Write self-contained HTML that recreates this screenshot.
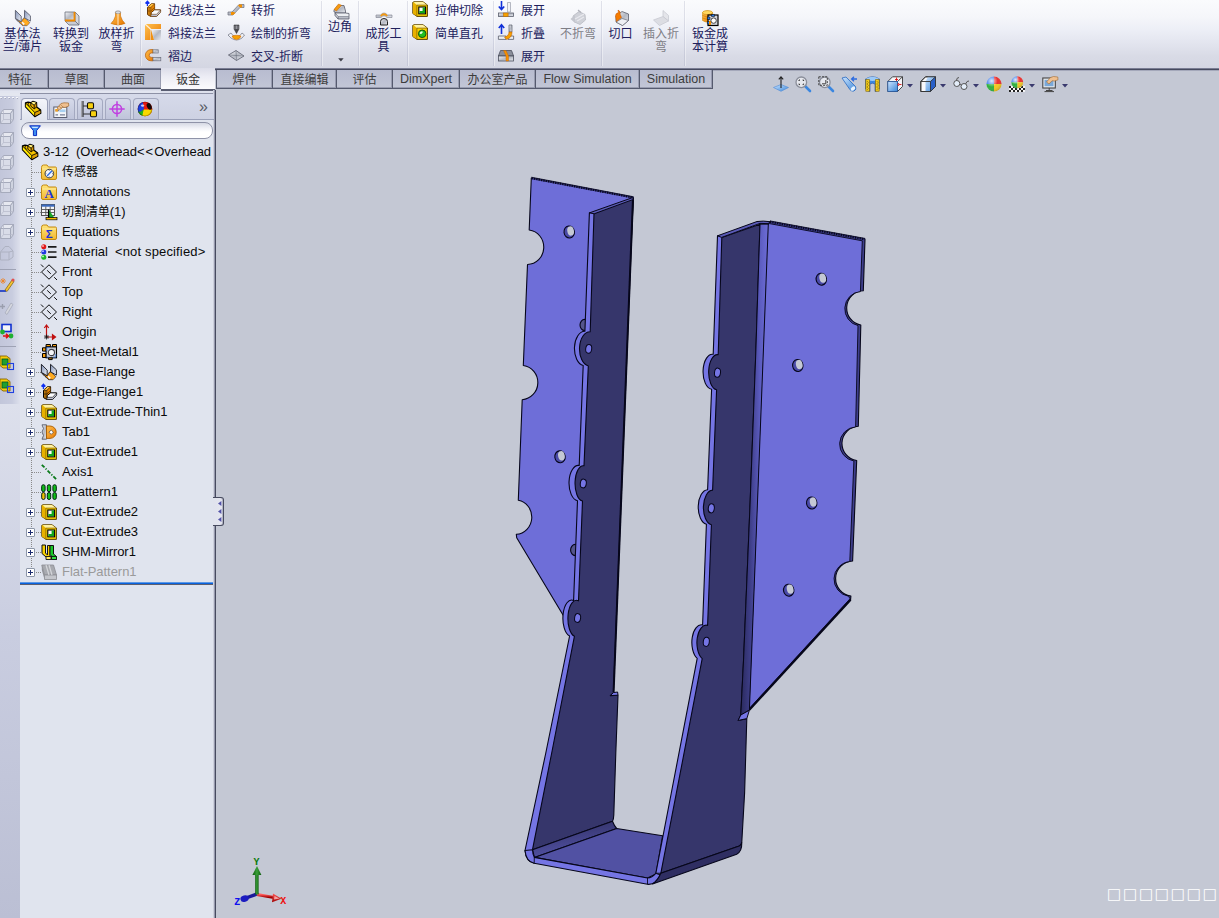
<!DOCTYPE html><html lang="zh"><head><meta charset="utf-8"><title>SolidWorks</title><style>

*{box-sizing:border-box;margin:0;padding:0}
html,body{width:1219px;height:918px;overflow:hidden;background:#c4c8d4}
body{position:relative;font-family:"Liberation Sans","Noto Sans CJK SC",sans-serif;font-size:12px;color:#1f1f5a}
.abs{position:absolute}
#ribbon{position:absolute;left:0;top:0;width:1219px;height:68px;background:linear-gradient(#fafbfd 0,#f5f6fa 25%,#eceef6 45%,#e2e4ee 65%,#d9dbe6 82%,#d4d6e2 100%)}
.ribline{position:absolute;top:68px;height:3px;background:linear-gradient(#7a7d93 0,#7a7d93 33%,#464a5e 33%,#464a5e 66%,#a4a8ba 66%)}
.rl{position:absolute;white-space:nowrap;line-height:13px;font-size:12px;color:#20205c;text-align:center;transform:translateX(-50%)}
.rs{position:absolute;white-space:nowrap;line-height:14px;font-size:12px;color:#20205c}
.dis{color:#7e7e86}
.sep{position:absolute;top:1px;width:2px;height:65px;background:linear-gradient(90deg,rgba(150,154,180,.26) 0,rgba(150,154,180,.26) 50%,rgba(255,255,255,.4) 50%)}
  .tab{position:absolute;top:70px;height:19px;border:1px solid #555a6e;border-top:none;box-shadow:inset -1px -1px 0 rgba(120,124,146,.55);background:linear-gradient(#b8bcd0,#c2c6d6);color:#3c3c3c;font-size:12px;line-height:20px;text-align:center;white-space:nowrap}
.tab.on{background:linear-gradient(#dcdde9,#ececf4 40%,#fbfbfd);border:none;box-shadow:none;border-bottom:2px solid #5a5e72;top:68px;height:23px;line-height:24px;color:#333}
#lstrip{position:absolute;left:0;top:92px;width:20px;height:312px;background:linear-gradient(90deg,#c2c6da 0,#c8ccdf 60%,#dde0ec 100%)}
#lstrip2{position:absolute;left:0;top:404px;width:20px;height:514px;background:linear-gradient(#dde0ec,#c9cde0 45%,#bbbfd4)}
#panel{position:absolute;left:20px;top:92px;width:194px;height:826px;background:#e0e4ee}
#split{position:absolute;left:213px;top:90px;width:3px;height:828px;background:linear-gradient(90deg,#cdd0dc 0,#cdd0dc 33%,#9699ad 33%,#9699ad 66%,#474b5f 66%)}
.row{position:absolute;left:62px;white-space:nowrap;font-size:13px;line-height:16px;color:#0a0a0a;letter-spacing:-0.05px}
.pm{position:absolute;left:26px;width:9px;height:9px;border:1px solid #8c96a8;background:#fff;border-radius:1px}
.pm:before{content:"";position:absolute;left:1px;top:3px;width:5px;height:1px;background:#1c2c70}
.pm:after{content:"";position:absolute;left:3px;top:1px;width:1px;height:5px;background:#1c2c70}
.tofu{position:absolute;width:12px;height:12px;border:1px solid #fff;box-shadow:inset 0 0 0 0.5px rgba(255,255,255,.6)}
svg{overflow:visible}

</style></head><body>
<svg class="model" width="1219" height="918" viewBox="0 0 1219 918" style="position:absolute;left:0;top:0">
<defs>
<linearGradient id="gb" x1="0" x2="1" y1="0" y2="0"><stop offset="0" stop-color="#2a2a5e"/><stop offset="0.35" stop-color="#3e3e88"/><stop offset="0.7" stop-color="#5c5cc0"/><stop offset="1" stop-color="#6e6ed8"/></linearGradient>
<linearGradient id="gl" x1="0" x2="0.25" y1="0" y2="1"><stop offset="0" stop-color="#302f62"/><stop offset="1" stop-color="#5151a3"/></linearGradient>
</defs>
<path d="M531.3 178 L633.3 197.5 L612 640 L578 640 L516.7 537.7 L516.3 534.3 A16.4 17.2 0 0 0 518.3 500.2 L522.2 399.7 A16.8 17.2 0 0 0 523.3 365.5 L527.5 264.5 A16.3 17.3 0 0 0 529.2 230 Z" fill="#6e6ed8" stroke="#06061a" stroke-width="1.1" stroke-linejoin="round"/>
<path d="M531.6 178.2 L633.3 197.6" stroke="#34347a" stroke-width="2" fill="none"/>
<path d="M531.6 178.2 L633.3 197.6" stroke="#06061a" stroke-width="2" stroke-dasharray="1.2 1.2" fill="none"/>
<path d="M531.4 177.2 L633.3 196.7" stroke="#06061a" stroke-width="0.7" fill="none"/>
<g><ellipse cx="569.2" cy="232" rx="5.2" ry="6" fill="#4a4aa8" stroke="#06061a" stroke-width="1.1" transform="rotate(-8 569.2 232)"/><ellipse cx="570.8000000000001" cy="231.3" rx="3.3" ry="4.7" fill="#c4c8d4" transform="rotate(-12 569.2 232)"/></g>
<g><ellipse cx="560" cy="456.8" rx="5.2" ry="6" fill="#4a4aa8" stroke="#06061a" stroke-width="1.1" transform="rotate(-8 560 456.8)"/><ellipse cx="561.6" cy="456.1" rx="3.3" ry="4.7" fill="#c4c8d4" transform="rotate(-12 560 456.8)"/></g>
<ellipse cx="584.6" cy="325" rx="4.6" ry="5.6" fill="#55558c" stroke="#06061a" stroke-width="1.1"/>
<ellipse cx="575.2" cy="550" rx="4.6" ry="5.6" fill="#55558c" stroke="#06061a" stroke-width="1.1"/>
<path d="M589.4 212.8 L584.9 331.3 A10.3 17.2 0 0 0 583.2 365.5 L579.2 465.5 A9.3 17.6 0 0 0 577.5 500.7 L573.6 600.5 A8.6 18 0 0 0 569.6 636.0 L545.8 753.0 L525.0 850.5 Q526 861.5 534.2 863.3 L540 850 L533.0 850.5 L553.8 753.0 L577.6 636.0 L581.6 600.5 L585.5 500.7 L587.2 465.5 L591.2 365.5 L592.9 331.3 L597.4 212.8 Z" fill="#7575e4" stroke="#06061a" stroke-width="1.1" stroke-linejoin="round"/>
<path d="M633.2 198.2 L613.4 693 L610.3 695.6 L618 695.2 L615.8 753 L613.8 815 Q613.6 819.5 612.5 821.3 L532.5 849.7 L532.5 849.7 L551.7 753.0 L574.4 636.3 A8.4 18 0 0 1 578.5 600.8 L582.5 501.0 A8.2 17.6 0 0 1 584.0 465.8 L588.3 366.0 A10.3 17.2 0 0 1 590.2 331.8 L594.0 213.3 Z" fill="#36366b" stroke="#06061a" stroke-width="1.1" stroke-linejoin="round"/>
<path d="M633 198.5 L613.6 692" stroke="#06061a" stroke-width="2" fill="none"/>
<path d="M589.6 212.8 L632.6 197.6 L633.4 199.4 L594.2 213.8 Z" fill="#5a5ab6" stroke="#06061a" stroke-width="1"/>
<ellipse cx="588.7" cy="348.8" rx="3" ry="4.4" fill="#7575e4" stroke="#06061a" stroke-width="1" transform="rotate(8 588.7 348.8)"/>
<ellipse cx="583.3" cy="483.5" rx="3" ry="4.4" fill="#7575e4" stroke="#06061a" stroke-width="1" transform="rotate(8 583.3 483.5)"/>
<ellipse cx="577.6" cy="618" rx="3" ry="4.4" fill="#7575e4" stroke="#06061a" stroke-width="1" transform="rotate(8 577.6 618)"/>
<path d="M532.5 849.7 L612.5 821.3 Q614.5 826.5 616.7 828.5 L534.4 857.4 Z" fill="url(#gl)" stroke="#06061a" stroke-width="1.1" stroke-linejoin="round"/>
<path d="M534.4 857.4 L616.7 828.5 L662.6 835.8 L656 874 L647.5 878 Z" fill="#5151a3" stroke="#06061a" stroke-width="1.1" stroke-linejoin="round"/>
<path d="M525 850.5 Q526 861.5 534.2 863.3 L647.5 884.3 Q655.5 885.2 660.6 875 L655.8 873.3 Q652 877.6 647.5 878 L534.4 857.4 Q532.6 854 532.5 849.7 Z" fill="#7575e4" stroke="#06061a" stroke-width="1.1" stroke-linejoin="round"/>
<path d="M534.3 857.4 L534.2 863.3 M647.5 878 L647.5 884.3" stroke="#06061a" stroke-width="0.9" fill="none"/>
<path d="M770 221.7 L865 239.2 L863.3 290.8 A16.6 17.2 0 0 0 860.8 325 L858.3 426.3 A17.2 17.2 0 0 0 856.7 460.5 L852.6 561 A17.8 17.6 0 0 0 850.9 596 L850.6 599.6 L749.2 709.6 L768.3 224 Z" fill="#3f3f8c" stroke="#06061a" stroke-width="1.1" stroke-linejoin="round"/>
<path d="M769.5 223.6 L862.3 240.8 L860.4 291.6 A16.6 17.2 0 0 0 858 325.6 L855.6 426.9 A17.2 17.2 0 0 0 853.9 461 L849.8 561.5 A17.8 17.6 0 0 0 848.6 596.3 L850 598.8 L749 708.8 L767.6 225 Z" fill="#6e6ed8" stroke="#06061a" stroke-width="0.9" stroke-linejoin="round"/>
<path d="M770 221.8 L865 239.3" stroke="#34347a" stroke-width="2" fill="none"/>
<path d="M770 221.8 L865 239.3" stroke="#06061a" stroke-width="2" stroke-dasharray="1.2 1.2" fill="none"/>
<path d="M770 220.9 L865 238.4" stroke="#06061a" stroke-width="0.7" fill="none"/>
<path d="M850.6 599.8 L749.4 709.8" stroke="#06061a" stroke-width="2.2" fill="none"/>
<g><ellipse cx="821.3" cy="279.2" rx="5.2" ry="6" fill="#4a4aa8" stroke="#06061a" stroke-width="1.1" transform="rotate(-8 821.3 279.2)"/><ellipse cx="822.9" cy="278.5" rx="3.3" ry="4.7" fill="#c4c8d4" transform="rotate(-12 821.3 279.2)"/></g>
<g><ellipse cx="797.8" cy="365.5" rx="5.2" ry="6" fill="#4a4aa8" stroke="#06061a" stroke-width="1.1" transform="rotate(-8 797.8 365.5)"/><ellipse cx="799.4" cy="364.8" rx="3.3" ry="4.7" fill="#c4c8d4" transform="rotate(-12 797.8 365.5)"/></g>
<g><ellipse cx="811.7" cy="503" rx="5.2" ry="6" fill="#4a4aa8" stroke="#06061a" stroke-width="1.1" transform="rotate(-8 811.7 503)"/><ellipse cx="813.3000000000001" cy="502.3" rx="3.3" ry="4.7" fill="#c4c8d4" transform="rotate(-12 811.7 503)"/></g>
<g><ellipse cx="788.7" cy="590.2" rx="5.2" ry="6" fill="#4a4aa8" stroke="#06061a" stroke-width="1.1" transform="rotate(-8 788.7 590.2)"/><ellipse cx="790.3000000000001" cy="589.5" rx="3.3" ry="4.7" fill="#c4c8d4" transform="rotate(-12 788.7 590.2)"/></g>
<path d="M717.5 235.8 L713.2 354.3 A9.2 17.3 0 0 0 711.6 389.3 L707.6 489.7 A9.6 17.4 0 0 0 706.4 524.3 L702.6 625.0 A9.4 17.6 0 0 0 697.2 658.3 L671.3 793.0 L655.8 873.3 L663.8 873.3 L679.3 793.0 L705.2 658.3 L710.6 625.0 L714.4 524.3 L715.6 489.7 L719.6 389.3 L721.2 354.3 L725.5 235.8 Z" fill="#7575e4" stroke="#06061a" stroke-width="1.1" stroke-linejoin="round"/>
<path d="M760 224.2 L755.8 353 L750 506 L743.6 659 L740.8 715 L738.2 720.4 L746.8 718.6 L744.6 793 L741.8 842 Q741.6 845 739.2 846 L660.8 873.3 L660.8 873.3 L676.3 793.4 L702.2 658.7 A9.2 17.6 0 0 1 707.6 625.4 L711.4 524.7 A9.4 17.4 0 0 1 712.6 490.1 L716.6 389.7 A8.6 17.3 0 0 1 718.2 354.7 L721.8 237.6 Z" fill="#36366b" stroke="#06061a" stroke-width="1.1" stroke-linejoin="round"/>
<path d="M717.5 235.8 L757 221.5 Q763 220.6 770 221.7 L768.3 223.6 L760 223.4 L721.6 237.4 Z" fill="#5a5ab6" stroke="#06061a" stroke-width="1" stroke-linejoin="round"/>
<path d="M760 224.2 L768.3 224.2 L749.4 710 L740.8 715 L743.6 659 L750 506 L755.8 353 Z" fill="url(#gb)" stroke="#06061a" stroke-width="1" stroke-linejoin="round"/>
<path d="M740.8 715 L749.4 710.2 L746.8 718.6 L738.2 720.4 Z" fill="#7575e4" stroke="#06061a" stroke-width="1" stroke-linejoin="round"/>
<path d="M613.4 692.6 L617.6 692 L618 695.2 L610.3 695.6 Z" fill="#7575e4" stroke="#06061a" stroke-width="1" stroke-linejoin="round"/>
<path d="M660.8 873.3 L739.2 846 Q741.4 845 741.8 842.5 Q742 851.5 736.7 854.2 L652.5 883.9 Q657.5 881 660.8 873.3 Z" fill="#2f2e62" stroke="#06061a" stroke-width="1.1" stroke-linejoin="round"/>
<ellipse cx="717.5" cy="372.7" rx="3" ry="4.6" fill="#7575e4" stroke="#06061a" stroke-width="1" transform="rotate(8 717.5 372.7)"/>
<ellipse cx="711.3" cy="508.3" rx="3" ry="4.6" fill="#7575e4" stroke="#06061a" stroke-width="1" transform="rotate(8 711.3 508.3)"/>
<ellipse cx="706.3" cy="641.8" rx="3" ry="4.6" fill="#7575e4" stroke="#06061a" stroke-width="1" transform="rotate(8 706.3 641.8)"/>
</svg>
<div id="ribbon"></div><div class="ribline" style="left:0;width:161px"></div><div class="ribline" style="left:215px;width:1004px"></div>
<div class="sep" style="left:140px"></div>
<div class="sep" style="left:321px"></div>
<div class="sep" style="left:358px"></div>
<div class="sep" style="left:407px"></div>
<div class="sep" style="left:493px"></div>
<div class="sep" style="left:601px"></div>
<div class="sep" style="left:684px"></div>
<div class="rl" style="left:22.5px;top:28px">基体法<br>兰/薄片</div>
<div class="rl" style="left:71px;top:28px">转换到<br>钣金</div>
<div class="rl" style="left:116.5px;top:28px">放样折<br>弯</div>
<div class="rl" style="left:383.5px;top:28px">成形工<br>具</div>
<div class="rl dis" style="left:578px;top:28px">不折弯</div>
<div class="rl" style="left:620.5px;top:28px">切口</div>
<div class="rl dis" style="left:661px;top:28px">插入折<br>弯</div>
<div class="rl" style="left:710px;top:28px">钣金成<br>本计算</div>
<div class="rl" style="left:340px;top:21px">边角</div>
<svg class="abs" style="left:338px;top:58px" width="6" height="4"><path d="M0.2 0.2 L5.6 0.2 L2.9 3.4 Z" fill="#3a3a44"/></svg>
<div class="rs" style="left:168px;top:4px">边线法兰</div>
<div class="rs" style="left:168px;top:27px">斜接法兰</div>
<div class="rs" style="left:168px;top:50px">褶边</div>
<div class="rs" style="left:251px;top:4px">转折</div>
<div class="rs" style="left:251px;top:27px">绘制的折弯</div>
<div class="rs" style="left:251px;top:50px">交叉-折断</div>
<div class="rs" style="left:435px;top:4px">拉伸切除</div>
<div class="rs" style="left:435px;top:27px">简单直孔</div>
<div class="rs" style="left:521px;top:4px">展开</div>
<div class="rs" style="left:521px;top:27px">折叠</div>
<div class="rs" style="left:521px;top:50px">展开</div>
<div class="tab" style="left:-9px;width:58px">特征</div>
<div class="tab" style="left:48px;width:57px">草图</div>
<div class="tab" style="left:104px;width:58px">曲面</div>
<div class="tab on" style="left:161px;width:54px">钣金</div>
<div class="tab" style="left:216px;width:57px">焊件</div>
<div class="tab" style="left:272px;width:65px">直接编辑</div>
<div class="tab" style="left:336px;width:57px">评估</div>
<div class="tab" style="left:392px;width:68px;font-size:12.5px;line-height:18px">DimXpert</div>
<div class="tab" style="left:459px;width:77px">办公室产品</div>
<div class="tab" style="left:535px;width:105px;font-size:12.5px;line-height:18px">Flow Simulation</div>
<div class="tab" style="left:639px;width:74px;font-size:12.5px;line-height:18px">Simulation</div>
<div id="lstrip"></div><div id="lstrip2"></div><div id="panel"></div>
<div class="abs" style="left:0;top:93px;width:20px;height:3px;background:#e4e7f0"></div>
<div class="abs" style="left:0;top:97px;width:18px;height:1px;background:repeating-linear-gradient(90deg,#f6f7fb 0,#f6f7fb 2px,transparent 2px,transparent 4px)"></div><div class="abs" style="left:1px;top:98px;width:18px;height:1px;background:repeating-linear-gradient(90deg,#a8acc0 0,#a8acc0 1px,transparent 1px,transparent 4px)"></div>
<div class="abs" style="left:0;top:89px;width:161px;height:4px;background:linear-gradient(#c8ccdc,#e2e5f0 50%)"></div><div class="abs" style="left:161px;top:91px;width:54px;height:2px;background:#dde0ec"></div><div class="abs" style="left:20px;top:93px;width:194px;height:1px;background:#8d91a6"></div>
<div id="split"></div>
<div class="abs" style="left:20px;top:94px;width:194px;height:26px;background:linear-gradient(#d6daea,#cdd1e2)"></div>
<div class="abs" style="left:20px;top:119px;width:194px;height:1px;background:#9aa0b8"></div>
<div class="abs" style="left:21px;top:98px;width:27px;height:22px;border:1px solid #9aa0b8;border-bottom:none;border-radius:4px 4px 0 0;background:linear-gradient(#f4f5fa,#e0e4ee)"></div>
<div class="abs" style="left:48.5px;top:98px;width:26px;height:21px;border:1px solid #a4a9c0;border-bottom:none;border-radius:4px 4px 0 0;background:linear-gradient(#d6daea,#bfc4da)"></div>
<div class="abs" style="left:76.5px;top:98px;width:26px;height:21px;border:1px solid #a4a9c0;border-bottom:none;border-radius:4px 4px 0 0;background:linear-gradient(#d6daea,#bfc4da)"></div>
<div class="abs" style="left:104.5px;top:98px;width:26px;height:21px;border:1px solid #a4a9c0;border-bottom:none;border-radius:4px 4px 0 0;background:linear-gradient(#d6daea,#bfc4da)"></div>
<div class="abs" style="left:132.5px;top:98px;width:26px;height:21px;border:1px solid #a4a9c0;border-bottom:none;border-radius:4px 4px 0 0;background:linear-gradient(#d6daea,#bfc4da)"></div>
<div class="abs" style="left:199px;top:99px;font-size:16px;line-height:16px;color:#5a5c66;letter-spacing:-1px">»</div>
<div class="abs" style="left:21px;top:122px;width:192px;height:17px;border:1px solid #8f93a8;border-radius:8px;background:linear-gradient(#d6d9e4,#f2f3f8 35%,#fff 60%)"></div>
<div class="abs" style="left:31px;top:162px;width:0;height:411px;border-left:1px dotted #8a8a8a"></div>
<div class="row" style="left:43px;top:144px">3-12&nbsp; (Overhead<span style="letter-spacing:1.1px">&lt;&lt;</span>Overhead</div>
<div class="row" style="top:164px"><span style="font-size:12px">传感器</span></div>
<div class="abs" style="left:32px;top:172px;width:9px;height:0;border-top:1px dotted #8a8a8a"></div>
<div class="row" style="top:184px">Annotations</div>
<div class="abs" style="left:32px;top:192px;width:9px;height:0;border-top:1px dotted #8a8a8a"></div>
<div class="pm" style="top:188px"></div>
<div class="row" style="top:204px"><span style="font-size:12px">切割清单</span>(1)</div>
<div class="abs" style="left:32px;top:212px;width:9px;height:0;border-top:1px dotted #8a8a8a"></div>
<div class="pm" style="top:208px"></div>
<div class="row" style="top:224px">Equations</div>
<div class="abs" style="left:32px;top:232px;width:9px;height:0;border-top:1px dotted #8a8a8a"></div>
<div class="pm" style="top:228px"></div>
<div class="row" style="top:244px">Material&nbsp; <span style="letter-spacing:0.15px">&lt;not specified&gt;</span></div>
<div class="abs" style="left:32px;top:252px;width:9px;height:0;border-top:1px dotted #8a8a8a"></div>
<div class="row" style="top:264px">Front</div>
<div class="abs" style="left:32px;top:272px;width:9px;height:0;border-top:1px dotted #8a8a8a"></div>
<div class="row" style="top:284px">Top</div>
<div class="abs" style="left:32px;top:292px;width:9px;height:0;border-top:1px dotted #8a8a8a"></div>
<div class="row" style="top:304px">Right</div>
<div class="abs" style="left:32px;top:312px;width:9px;height:0;border-top:1px dotted #8a8a8a"></div>
<div class="row" style="top:324px">Origin</div>
<div class="abs" style="left:32px;top:332px;width:9px;height:0;border-top:1px dotted #8a8a8a"></div>
<div class="row" style="top:344px">Sheet-Metal1</div>
<div class="abs" style="left:32px;top:352px;width:9px;height:0;border-top:1px dotted #8a8a8a"></div>
<div class="row" style="top:364px">Base-Flange</div>
<div class="abs" style="left:32px;top:372px;width:9px;height:0;border-top:1px dotted #8a8a8a"></div>
<div class="pm" style="top:368px"></div>
<div class="row" style="top:384px">Edge-Flange1</div>
<div class="abs" style="left:32px;top:392px;width:9px;height:0;border-top:1px dotted #8a8a8a"></div>
<div class="pm" style="top:388px"></div>
<div class="row" style="top:404px">Cut-Extrude-Thin1</div>
<div class="abs" style="left:32px;top:412px;width:9px;height:0;border-top:1px dotted #8a8a8a"></div>
<div class="pm" style="top:408px"></div>
<div class="row" style="top:424px">Tab1</div>
<div class="abs" style="left:32px;top:432px;width:9px;height:0;border-top:1px dotted #8a8a8a"></div>
<div class="pm" style="top:428px"></div>
<div class="row" style="top:444px">Cut-Extrude1</div>
<div class="abs" style="left:32px;top:452px;width:9px;height:0;border-top:1px dotted #8a8a8a"></div>
<div class="pm" style="top:448px"></div>
<div class="row" style="top:464px">Axis1</div>
<div class="abs" style="left:32px;top:472px;width:9px;height:0;border-top:1px dotted #8a8a8a"></div>
<div class="row" style="top:484px">LPattern1</div>
<div class="abs" style="left:32px;top:492px;width:9px;height:0;border-top:1px dotted #8a8a8a"></div>
<div class="row" style="top:504px">Cut-Extrude2</div>
<div class="abs" style="left:32px;top:512px;width:9px;height:0;border-top:1px dotted #8a8a8a"></div>
<div class="pm" style="top:508px"></div>
<div class="row" style="top:524px">Cut-Extrude3</div>
<div class="abs" style="left:32px;top:532px;width:9px;height:0;border-top:1px dotted #8a8a8a"></div>
<div class="pm" style="top:528px"></div>
<div class="row" style="top:544px">SHM-Mirror1</div>
<div class="abs" style="left:32px;top:552px;width:9px;height:0;border-top:1px dotted #8a8a8a"></div>
<div class="pm" style="top:548px"></div>
<div class="row" style="top:564px;color:#9a9a9a">Flat-Pattern1</div>
<div class="abs" style="left:32px;top:572px;width:9px;height:0;border-top:1px dotted #8a8a8a"></div>
<div class="pm" style="top:568px"></div>
<div class="abs" style="left:20px;top:582px;width:193px;height:3px;background:linear-gradient(#5c98e6 0,#5c98e6 33%,#0a62dc 33%,#0a62dc 66%,#5e5f6e 66%)"></div>
<div class="abs" style="left:213px;top:497px;width:11px;height:29px;border:1px solid #474b5f;border-left:none;border-radius:0 3px 3px 0;background:linear-gradient(90deg,#e0e3ed,#e4e5ef);box-shadow:inset -1px 0 0 rgba(90,94,115,.35)"></div>
<svg class="abs" style="left:218px;top:501px" width="4" height="5"><path d="M3.4 0 L3.4 5 L0 2.5 Z" fill="#5252a8"/></svg>
<svg class="abs" style="left:218px;top:509px" width="4" height="5"><path d="M3.4 0 L3.4 5 L0 2.5 Z" fill="#5252a8"/></svg>
<svg class="abs" style="left:218px;top:517px" width="4" height="5"><path d="M3.4 0 L3.4 5 L0 2.5 Z" fill="#5252a8"/></svg>
<div class="abs" style="left:1107px;top:886px;font:15px/16px 'DejaVu Sans','Liberation Sans',sans-serif;color:#fff;letter-spacing:1.78px;white-space:nowrap">□□□□□□□</div>
<svg width="0" height="0" style="position:absolute"><defs>
<linearGradient id="gor" x1="0" y1="0" x2="1" y2="1"><stop offset="0" stop-color="#ffc050"/><stop offset="1" stop-color="#e87800"/></linearGradient>
<linearGradient id="ggr" x1="0" y1="0" x2="1" y2="1"><stop offset="0" stop-color="#f4f5f8"/><stop offset="0.5" stop-color="#b4b8c2"/><stop offset="1" stop-color="#e6e8ee"/></linearGradient>
<linearGradient id="gye" x1="0" y1="0" x2="1" y2="1"><stop offset="0" stop-color="#fff2a0"/><stop offset="0.5" stop-color="#f8cf10"/><stop offset="1" stop-color="#e0a800"/></linearGradient>
<linearGradient id="gfo" x1="0" y1="0" x2="0" y2="1"><stop offset="0" stop-color="#ffe47a"/><stop offset="1" stop-color="#f2b830"/></linearGradient>
<linearGradient id="gbl" x1="0" y1="0" x2="1" y2="1"><stop offset="0" stop-color="#cfe6ff"/><stop offset="1" stop-color="#3a86d8"/></linearGradient>
<linearGradient id="gpl" x1="0" y1="0" x2="1" y2="1"><stop offset="0" stop-color="#7f8fb4"/><stop offset="0.6" stop-color="#c4ccde"/><stop offset="1" stop-color="#eef1f8"/></linearGradient>
<radialGradient id="gball" cx="0.35" cy="0.3" r="0.8"><stop offset="0" stop-color="#fff" stop-opacity="0.85"/><stop offset="0.5" stop-color="#fff" stop-opacity="0"/><stop offset="1" stop-color="#000" stop-opacity="0.25"/></radialGradient>
</defs></svg>
<svg class="abs" style="left:15px;top:10px" width="16" height="16" viewBox="0 0 16 16"><path d="M0.4 8.4 L7.8 15.7 L12 15.7 L14.8 12.6 L9 7.6 L6.2 11.6 Z" fill="#f08c00" stroke="#5a5e6e" stroke-width="0.7" stroke-linejoin="round"/><path d="M7 12.2 L9.6 8.6 L14.4 12.6 L11.8 15.4 Z" fill="#ffab20"/><path d="M7.4 11.6 L9.8 13.8 L8.8 15.2 L6.4 12.8 Z" fill="#f4f6fa"/><path d="M0.4 0.3 L6.2 6.2 L6.2 11.8 L0.4 8.4 Z" fill="url(#gpl)" stroke="#5a5e6e" stroke-width="0.9" stroke-linejoin="round"/><path d="M9.5 0.3 L15.4 5.8 L15.4 11.1 L9.5 7.8 Z" fill="url(#gpl)" stroke="#5a5e6e" stroke-width="0.9" stroke-linejoin="round"/><path d="M0.6 9.4 L7.6 15.6" stroke="#5a5e6e" stroke-width="0.9" stroke-dasharray="1.4 0.8"/></svg>
<svg class="abs" style="left:64px;top:11px" width="16" height="16" viewBox="0 0 16 16"><path d="M1 1 H11 V10 H1 Z" fill="url(#ggr)" stroke="#6a6e7c" stroke-width="0.8"/><path d="M11 1 L15 5 V14 L11 10 Z" fill="#d4d7de" stroke="#6a6e7c" stroke-width="0.8"/><path d="M1 10 H11 L15 14 H5 Z" fill="#c9ccd4" stroke="#6a6e7c" stroke-width="0.8"/><path d="M1 9.5 H11 M10.5 1 V10" stroke="#f08a00" stroke-width="1.8" fill="none"/></svg>
<svg class="abs" style="left:109.5px;top:10px" width="16" height="16" viewBox="0 0 16 16"><path d="M5.5 2 Q8 0.5 10.5 2 L10.5 6 Q12 11 15 13.5 Q8 16.5 1 13.5 Q4 11 5.5 6 Z" fill="url(#gor)" stroke="#c86a00" stroke-width="0.6"/><ellipse cx="8" cy="2.3" rx="2.7" ry="1.4" fill="#d8dae0" stroke="#80848e" stroke-width="0.6"/><path d="M8 3.5 V15" stroke="#fff" stroke-width="1" opacity="0.8"/></svg>
<svg class="abs" style="left:145px;top:1px" width="16" height="16" viewBox="0 0 16 16"><path d="M2.4 0.2 V5 M0.5 2.5 L2.4 0.2 L4.4 2.5" stroke="#1030f0" stroke-width="1.3" fill="none"/><path d="M2.5 6.3 L6.3 2.8 L9.6 2.8 L9.6 11.5 L5.6 15.4 L2.5 13.6 Z" fill="#f59a10" stroke="#6a3a08" stroke-width="1" stroke-linejoin="round"/><path d="M2.6 6.4 L6.3 3 L9.4 3 L5.8 6.4 Z" fill="#ffc040"/><path d="M5.8 6.6 L9.4 3.2 V11.4 L5.8 15 Z" fill="#e88400"/><path d="M2.5 6.4 H5.8 L9.5 2.9 M5.8 6.4 V15.3 M2.6 10 H5.8 L9.5 6.6 M4.1 6.4 V14.4 M5.8 12.6 L9.5 9.2" stroke="#6a3a08" stroke-width="0.6" fill="none"/><path d="M6.2 11.6 L9.6 8.8 L15.6 8.8 L15.6 11 L11.6 15.5 L6.2 15.5 Z" fill="#fafbfd" stroke="#6a3a08" stroke-width="1" stroke-linejoin="round"/><path d="M6.4 13.4 H11.6 L15.4 9.2 V10.8 L11.5 15.2 H6.4 Z" fill="#b9bdd0"/><path d="M6.2 13.3 H11.6 L15.5 9" stroke="#6a3a08" stroke-width="0.6" fill="none"/></svg>
<svg class="abs" style="left:145px;top:24px" width="16" height="16" viewBox="0 0 16 16"><path d="M0 0 H16 V5 H5.5 V16 H0 Z" fill="url(#gor)"/><path d="M0 0 L6 5.5" stroke="#fff" stroke-width="1.2" opacity="0.8"/><path d="M6.5 6 H16 V16 H9 Z" fill="url(#ggr)"/><path d="M6 5.5 L9 16 H6 Z" fill="#f09010"/></svg>
<svg class="abs" style="left:145px;top:49px" width="16" height="13" viewBox="0 0 16 13"><path d="M8 0.6 H6 A5.6 5.6 0 0 0 6 11.8 H8 V8.4 H6.4 A2.2 2.2 0 0 1 6.4 4 H8 Z" fill="url(#gor)" stroke="#b85c00" stroke-width="0.7"/><rect x="8" y="0.8" width="5.2" height="3.2" fill="url(#ggr)" stroke="#6a6e7c" stroke-width="0.7"/><rect x="8" y="8.4" width="7.8" height="3.4" fill="url(#ggr)" stroke="#6a6e7c" stroke-width="0.7"/></svg>
<svg class="abs" style="left:228px;top:3px" width="16" height="13" viewBox="0 0 16 13"><path d="M0 9 L4 9 L11 1.5 L16 1.5 L16 4.5 L12 4.5 L5 12 L0 12 Z" fill="url(#ggr)" stroke="#6a6e7c" stroke-width="0.7"/><path d="M3 9 L6 9 L7.5 10 L5 12 L3 12 Z" fill="#f39000"/><path d="M10 2.5 L11.2 1.5 L14 1.5 L14 4.5 L12 4.5 Z" fill="#f39000"/></svg>
<svg class="abs" style="left:228px;top:24px" width="17" height="17" viewBox="0 0 17 17"><path d="M6 1 H11 V5 L8.5 9.5 L6 5 Z" fill="#4a4a50" stroke="#222" stroke-width="0.5"/><path d="M7 1.5 V5 M8.5 1.5 V5 M10 1.5 V5" stroke="#c8c8d0" stroke-width="0.6"/><path d="M0 11 L3 9 L5 11.5 Q8.5 14 12 11.5 L14 9 L16.5 11 L14 14 Q8.5 18 3 14 Z" fill="#f0f1f5" stroke="#6a6e7c" stroke-width="0.7"/><path d="M4 12 Q8.5 10.5 13 12 Q12 15.2 8.5 15.6 Q5 15.2 4 12 Z" fill="#f6a000" stroke="#d06000" stroke-width="0.5"/></svg>
<svg class="abs" style="left:228px;top:49.5px" width="17" height="11" viewBox="0 0 17 11"><path d="M0.5 5 L8 0.5 L16 6 L8.5 10.5 Z" fill="url(#ggr)" stroke="#5a5e6c" stroke-width="0.8" stroke-linejoin="round"/><path d="M0.5 5 L16 6 M8 0.5 L8.5 10.5" stroke="#6a6e7c" stroke-width="0.6"/></svg>
<svg class="abs" style="left:333px;top:2.5px" width="16" height="16" viewBox="0 0 16 16"><path d="M1 7 L5 2.5 L11 2.5 L12.5 8 L12.5 10 L4 10 L1 9 Z" fill="url(#ggr)" stroke="#5a5e6c" stroke-width="0.8"/><path d="M1 6.5 L5.5 1 L8.5 2.2 L3.5 8 Z" fill="#f59a10" stroke="#c06000" stroke-width="0.5"/><path d="M2 10 L5 13.5 L16 13.5 L16 10.5 L12.5 10 L4 10 Z" fill="#eceef2" stroke="#5a5e6c" stroke-width="0.8"/><path d="M5 13.5 V16 H16 V13.5 M2 10 V12.5 L5 16" fill="#b8bcc6" stroke="#5a5e6c" stroke-width="0.8"/></svg>
<svg class="abs" style="left:376px;top:12px" width="16" height="14" viewBox="0 0 16 14"><path d="M0 3 H4.5 Q8 -1 11.5 3 H16 V5.5 H11 Q8 2.2 5 5.5 H0 Z" fill="url(#ggr)" stroke="#7a7e8c" stroke-width="0.6"/><path d="M4.2 3.4 Q8 -0.8 11.8 3.4 L10.6 4.6 Q8 2 5.4 4.6 Z" fill="#f59a10"/><path d="M4.5 13 V9.5 Q4.5 6.5 8 6.5 Q11.5 6.5 11.5 9.5 V13 Z" fill="url(#ggr)" stroke="#222" stroke-width="1"/></svg>
<svg class="abs" style="left:412px;top:1px" width="16" height="16" viewBox="0 0 16 16"><path d="M1.5 0.8 H11 L15.4 4 V15.4 H5 L0.8 12.5 V1.5 Z" fill="#f8d000" stroke="#5a4000" stroke-width="1" stroke-linejoin="round"/><path d="M1.5 1 H11 L15 4 H5 Z" fill="#fff2a0"/><path d="M1 1.5 L4.8 4.2 V15.2 L1 12.4 Z" fill="#e8b000"/><path d="M4.9 4.1 H15.3 M4.9 4.1 V15.3" stroke="#7a5800" stroke-width="0.7"/><rect x="6.8" y="6" width="6.8" height="6.8" fill="#fafafa" stroke="#000" stroke-width="1.1"/><path d="M10.6 6.6 H13 V12.2 H7.4 V10 H10.6 Z" fill="#10a818"/></svg>
<svg class="abs" style="left:412px;top:24px" width="16" height="16" viewBox="0 0 16 16"><path d="M1.5 0.8 H11 L15.4 4 V15.4 H5 L0.8 12.5 V1.5 Z" fill="#f8d000" stroke="#5a4000" stroke-width="1" stroke-linejoin="round"/><path d="M1.5 1 H11 L15 4 H5 Z" fill="#fff2a0"/><path d="M1 1.5 L4.8 4.2 V15.2 L1 12.4 Z" fill="#e8b000"/><path d="M4.9 4.1 H15.3 M4.9 4.1 V15.3" stroke="#7a5800" stroke-width="0.7"/><circle cx="10.2" cy="9.8" r="3.8" fill="#22c020" stroke="#0a4a0a" stroke-width="0.9"/><ellipse cx="9.2" cy="8.6" rx="1.7" ry="1.1" fill="#eaffe4" transform="rotate(-35 9.2 8.6)"/></svg>
<svg class="abs" style="left:498px;top:1px" width="16" height="16" viewBox="0 0 16 16"><path d="M3.5 0 V8 M0.8 5.5 L3.5 8.6 L6.2 5.5" stroke="#1030d8" stroke-width="1.6" fill="none"/><path d="M9.5 1.5 H12.5 V11 H9.5 Z" fill="#f2f3f6" stroke="#9a9eaa" stroke-width="0.7"/><rect x="0.4" y="12" width="15.2" height="3.4" fill="url(#ggr)" stroke="#5a5e6c" stroke-width="0.8"/><rect x="5.5" y="12" width="4.6" height="3.4" fill="#f6a200" stroke="#c06a00" stroke-width="0.6"/></svg>
<svg class="abs" style="left:498px;top:24px" width="16" height="16" viewBox="0 0 16 16"><path d="M3.5 10 V1.5 M0.8 4 L3.5 0.8 L6.2 4" stroke="#1030d8" stroke-width="1.6" fill="none"/><path d="M11 1 H14 V8 H11 Z" fill="url(#ggr)" stroke="#5a5e6c" stroke-width="0.7"/><path d="M0.4 12 H8 V15.4 H0.4 Z M10 12 H15.6 V15.4 H10Z" fill="#eceef2" stroke="#5a5e6c" stroke-width="0.8"/><path d="M11 8 H14 Q14 14 8.5 15.4 L6.5 13 Q11 12 11 8 Z" fill="#f6a000" stroke="#c06000" stroke-width="0.6"/></svg>
<svg class="abs" style="left:498px;top:50px" width="16" height="12" viewBox="0 0 16 12"><path d="M2.5 0.5 H13.5 L15.6 6 H0.4 Z" fill="#8a8e9a" stroke="#4a4e5c" stroke-width="0.8"/><rect x="0.4" y="6" width="15.2" height="5" fill="url(#ggr)" stroke="#4a4e5c" stroke-width="0.8"/><path d="M5.5 0.5 H8 L10.5 6 V11 H8 V6 Z" fill="#f69000" stroke="#c06000" stroke-width="0.4"/></svg>
<svg class="abs" style="left:570px;top:10px" width="16" height="16" viewBox="0 0 16 16"><path d="M3 6 L9 1.5 L15 4.5 L15.5 10 L10 14.5 L4.5 12 Z" fill="#cfd1d8" stroke="#b8bac2" stroke-width="0.8"/><path d="M0.5 9 L5 5 L5 13 Z" fill="#c4c6ce"/><path d="M5 9 L14 4 M7 11 L14 7" stroke="#e8e9ee" stroke-width="1.2"/><path d="M8 0 L11 2.5" stroke="#b0b2ba" stroke-width="1.2"/></svg>
<svg class="abs" style="left:613.5px;top:10px" width="16" height="16" viewBox="0 0 16 16"><path d="M2 6 L8 1.5 L14.5 4 L14.5 10.5 L8.5 15.5 L2 12 Z" fill="url(#ggr)" stroke="#5a5e6c" stroke-width="0.8"/><path d="M2 12 L8 8.5 L14.5 10.5 L8.5 15.5 Z" fill="#eef0f4" stroke="#5a5e6c" stroke-width="0.6"/><path d="M4 0 Q7 1.5 6 4 L7.5 7.5 L2.5 11.5 L1.5 6 Q1.5 3 4.5 2.5 Z" fill="#f57c00" stroke="#c05000" stroke-width="0.5"/></svg>
<svg class="abs" style="left:653px;top:10px" width="16" height="16" viewBox="0 0 16 16"><path d="M10 0.5 L15.5 5.5 V11 L10 6.5 Z" fill="#e4e5ea" stroke="#c4c6ce" stroke-width="0.7"/><path d="M0.5 10 L10 6.5 L15.5 11 L6.5 15.5 Z" fill="#dcdde3" stroke="#c4c6ce" stroke-width="0.7"/></svg>
<svg class="abs" style="left:702px;top:10px" width="16" height="16" viewBox="0 0 16 16"><path d="M0.5 2.5 Q5.5 -0.8 10.5 2.5 V10.5 Q5.5 13.8 0.5 10.5 Z" fill="url(#gor)" stroke="#c08000" stroke-width="0.5"/><ellipse cx="5.5" cy="2.6" rx="5" ry="2" fill="#ffd860" stroke="#c08000" stroke-width="0.5"/><path d="M0.5 5.5 Q5.5 8.5 10.5 5.5 M0.5 8 Q5.5 11 10.5 8" stroke="#c08000" stroke-width="0.6" fill="none"/><rect x="6" y="5" width="10" height="10.5" fill="#cfd2da" stroke="#000" stroke-width="1.2"/><path d="M5.4 7 H8 V9.5 H5.4 Z M5.4 11.5 H8 V14 H5.4 Z M9.5 4.4 H12.5 V6.5 H9.5Z" fill="#2a7ae0" stroke="#000" stroke-width="0.5"/><path d="M7 11 H9 V15 H7Z" fill="#f59000"/><circle cx="11.6" cy="10.6" r="2.7" fill="#fff" stroke="#444" stroke-width="1"/></svg>
<svg class="abs" style="left:25px;top:101px" width="16" height="16" viewBox="0 0 16 16"><path d="M0.5 1.9 L3 1.1 L5.8 1.7 L8 0.4 L11.5 1.6 L11.7 6 L15.6 9 L15.8 12.2 L9.8 15.6 L0.5 5.7 Z" fill="#f5c400" stroke="#000" stroke-width="1.3" stroke-linejoin="round"/><path d="M0.8 2.4 L9.6 11.6 L9.6 15 L0.8 5.6 Z" fill="#ffe800"/><path d="M9.9 11.6 L15.3 9.3 L15.4 12 L9.9 15.1 Z" fill="#e0a000"/><path d="M5.9 2 L9.1 4.3 L9.1 7.6 L5.9 5.2 Z" fill="#f0b000"/><path d="M5.9 1.9 L8 0.7 L11.2 1.8 L9.1 4.2 Z" fill="#fff080"/><path d="M9.3 4.3 L11.3 2 L11.4 6 L9.3 7.6 Z" fill="#d89400"/><path d="M0.8 2.2 L9.7 11.5 L15.5 9.1 M9.7 11.5 V15.4 M5.8 1.8 V5.2 L9.2 7.8 V4.2 Z M9.2 4.2 L11.4 1.8 M9.2 7.8 L11.6 6.1 M3.6 1.4 Q2 3.4 4.4 5.4" fill="none" stroke="#000" stroke-width="0.85" stroke-linejoin="round"/></svg>
<svg class="abs" style="left:53px;top:102px" width="16" height="16" viewBox="0 0 16 16"><rect x="0.8" y="5" width="13" height="10.5" fill="#f2f4f8" stroke="#5a5e70" stroke-width="1"/><path d="M2.5 8.5 H6 M2.5 12.8 H5 M7 12.8 H12" stroke="#7a8098" stroke-width="1.3"/><rect x="2.3" y="7" width="2.6" height="2.6" fill="#f0a020"/><rect x="6.5" y="7.5" width="6" height="2.6" fill="#a8d0f0"/><path d="M4 6 L8 1.5 L11 0.8 L15.5 1 L15.8 4 L12 5.5 L9.5 5 L6.5 8 Z" fill="#f0c090" stroke="#a06a30" stroke-width="0.7"/><path d="M6 4 L9 7 M7.5 2.5 L10.5 5.5" stroke="#a06a30" stroke-width="0.5"/></svg>
<svg class="abs" style="left:81px;top:101px" width="16" height="17" viewBox="0 0 16 17"><path d="M2 0 V16 M2 5 H7 M2 13 H10" stroke="#333" stroke-width="1.2" fill="none"/><path d="M0.6 0 V16" stroke="#888" stroke-width="0.7"/><rect x="6.5" y="1.8" width="6" height="6" rx="1.2" fill="#f8d010" stroke="#111" stroke-width="1.1"/><rect x="9.5" y="9.8" width="6" height="6" rx="1.2" fill="#f8d010" stroke="#111" stroke-width="1.1"/></svg>
<svg class="abs" style="left:109px;top:101px" width="16" height="16" viewBox="0 0 16 16"><circle cx="8" cy="8" r="4.6" fill="none" stroke="#c040e0" stroke-width="1.5"/><path d="M8 0.3 V15.7 M0.3 8 H15.7" stroke="#c040e0" stroke-width="1.5"/></svg>
<svg class="abs" style="left:137px;top:101px" width="16" height="16" viewBox="0 0 16 16"><clipPath id="cpb"><circle cx="8" cy="8" r="7.3"/></clipPath><g clip-path="url(#cpb)"><rect width="16" height="16" fill="#e81810"/><path d="M-1 -1 L5.5 -1 L7 8 L3 12 L-1 12 Z" fill="#1c40e0"/><path d="M7 8.6 L17 8.6 L17 17 L4 17 L4.6 11.4 Z" fill="#f8d800"/><path d="M-1 10.5 L3.4 10.8 L6.6 8.6 L5 17 L-1 17 Z" fill="#20b020"/><ellipse cx="5.6" cy="4.6" rx="1.6" ry="1.2" fill="#fff" opacity="0.75"/><circle cx="8" cy="8" r="7.3" fill="none" stroke="#000" stroke-opacity="0.28" stroke-width="1.6"/></g><ellipse cx="12.2" cy="5.4" rx="2.2" ry="3.5" fill="#120808" transform="rotate(-25 12.2 5.4)"/></svg>
<svg class="abs" style="left:29px;top:125px" width="12" height="11" viewBox="0 0 12 11"><path d="M0.6 0.8 H11.4 L7.6 5.5 V10.6 H4.4 V5.5 Z" fill="#3a8cf0" stroke="#0a2ac0" stroke-width="1" stroke-linejoin="round"/><path d="M2.5 1.8 H9.5 L8.5 3 H3.5Z" fill="#c8e4ff"/></svg>
<svg class="abs" style="left:22px;top:144px" width="16" height="16" viewBox="0 0 16 16"><path d="M0.5 1.9 L3 1.1 L5.8 1.7 L8 0.4 L11.5 1.6 L11.7 6 L15.6 9 L15.8 12.2 L9.8 15.6 L0.5 5.7 Z" fill="#f5c400" stroke="#000" stroke-width="1.3" stroke-linejoin="round"/><path d="M0.8 2.4 L9.6 11.6 L9.6 15 L0.8 5.6 Z" fill="#ffe800"/><path d="M9.9 11.6 L15.3 9.3 L15.4 12 L9.9 15.1 Z" fill="#e0a000"/><path d="M5.9 2 L9.1 4.3 L9.1 7.6 L5.9 5.2 Z" fill="#f0b000"/><path d="M5.9 1.9 L8 0.7 L11.2 1.8 L9.1 4.2 Z" fill="#fff080"/><path d="M9.3 4.3 L11.3 2 L11.4 6 L9.3 7.6 Z" fill="#d89400"/><path d="M0.8 2.2 L9.7 11.5 L15.5 9.1 M9.7 11.5 V15.4 M5.8 1.8 V5.2 L9.2 7.8 V4.2 Z M9.2 4.2 L11.4 1.8 M9.2 7.8 L11.6 6.1 M3.6 1.4 Q2 3.4 4.4 5.4" fill="none" stroke="#000" stroke-width="0.85" stroke-linejoin="round"/></svg>
<svg class="abs" style="left:41px;top:164px" width="16" height="16" viewBox="0 0 16 16"><path d="M0.5 3.5 Q0.5 1 2.5 1 H6 L7.5 3 H14.5 Q15.5 3 15.5 4.5 V14 Q15.5 15.5 14 15.5 H2 Q0.5 15.5 0.5 14 Z" fill="url(#gfo)" stroke="#c48a10" stroke-width="1"/><path d="M1.2 5 H14.8" stroke="#fff2b0" stroke-width="0.8"/><circle cx="8.3" cy="9.6" r="4.3" fill="#f4f6fa" stroke="#444" stroke-width="1"/><path d="M6 12 L10.8 7" stroke="#2a6ae0" stroke-width="1.3"/><path d="M8.3 5.8 V6.6 M8.3 12.6 V13.4 M4.5 9.6 H5.3 M11.3 9.6 H12.1" stroke="#333" stroke-width="0.8"/></svg>
<svg class="abs" style="left:41px;top:184px" width="16" height="16" viewBox="0 0 16 16"><path d="M0.5 3.5 Q0.5 1 2.5 1 H6 L7.5 3 H14.5 Q15.5 3 15.5 4.5 V14 Q15.5 15.5 14 15.5 H2 Q0.5 15.5 0.5 14 Z" fill="url(#gfo)" stroke="#c48a10" stroke-width="1"/><path d="M1.2 5 H14.8" stroke="#fff2b0" stroke-width="0.8"/><text x="8.2" y="14.3" text-anchor="middle" font-family="Liberation Serif,serif" font-weight="bold" font-size="13" fill="#1c34d8">A</text></svg>
<svg class="abs" style="left:41px;top:204px" width="16" height="16" viewBox="0 0 16 16"><rect x="0.5" y="0.5" width="13" height="11" fill="#f4f5f8" stroke="#555" stroke-width="1"/><rect x="0.5" y="0.5" width="13" height="2.2" fill="#3a6ac0"/><path d="M0.5 5.5 H13.5 M0.5 8.5 H13.5 M4.8 2.5 V11.5 M9.2 2.5 V11.5" stroke="#555" stroke-width="0.9"/><path d="M8 6 V14 H13.5 Z" fill="#18a828"/><path d="M7.6 5.5 V14" stroke="#000" stroke-width="1.4"/><rect x="5" y="13.6" width="11" height="2.2" fill="#f5b800" stroke="#000" stroke-width="0.7"/></svg>
<svg class="abs" style="left:41px;top:224px" width="16" height="16" viewBox="0 0 16 16"><path d="M0.5 3.5 Q0.5 1 2.5 1 H6 L7.5 3 H14.5 Q15.5 3 15.5 4.5 V14 Q15.5 15.5 14 15.5 H2 Q0.5 15.5 0.5 14 Z" fill="url(#gfo)" stroke="#c48a10" stroke-width="1"/><path d="M1.2 5 H14.8" stroke="#fff2b0" stroke-width="0.8"/><text x="8.2" y="13.6" text-anchor="middle" font-family="Liberation Sans,sans-serif" font-weight="bold" font-size="11.5" fill="#1c34d8">Σ</text></svg>
<svg class="abs" style="left:41px;top:244px" width="16" height="16" viewBox="0 0 16 16"><circle cx="2.8" cy="2.8" r="2.5" fill="#e01818"/><circle cx="2.8" cy="8" r="2.5" fill="#2038e0"/><circle cx="2.8" cy="13.2" r="2.5" fill="#18b828"/><circle cx="2" cy="2" r="0.9" fill="#ffc0c0"/><circle cx="2" cy="7.2" r="0.9" fill="#c0c8ff"/><circle cx="2" cy="12.4" r="0.9" fill="#c8ffc8"/><path d="M7 2.8 H15.5 M7 8 H15.5 M7 13.2 H15.5" stroke="#1a1a1a" stroke-width="1.7"/></svg>
<svg class="abs" style="left:41px;top:264px" width="16" height="16" viewBox="0 0 16 16"><path d="M0.5 8 L8 0.8 L15.5 8 L8 15.2 Z" fill="none" stroke="#000" stroke-width="0.95"/><path d="M0 0.5 L2.6 3.2 M13.2 13.2 L16 16 M6.2 6.4 L9.8 9.8" stroke="#000" stroke-width="0.95"/></svg>
<svg class="abs" style="left:41px;top:284px" width="16" height="16" viewBox="0 0 16 16"><path d="M0.5 8 L8 0.8 L15.5 8 L8 15.2 Z" fill="none" stroke="#000" stroke-width="0.95"/><path d="M0 0.5 L2.6 3.2 M13.2 13.2 L16 16 M6.2 6.4 L9.8 9.8" stroke="#000" stroke-width="0.95"/></svg>
<svg class="abs" style="left:41px;top:304px" width="16" height="16" viewBox="0 0 16 16"><path d="M0.5 8 L8 0.8 L15.5 8 L8 15.2 Z" fill="none" stroke="#000" stroke-width="0.95"/><path d="M0 0.5 L2.6 3.2 M13.2 13.2 L16 16 M6.2 6.4 L9.8 9.8" stroke="#000" stroke-width="0.95"/></svg>
<svg class="abs" style="left:41px;top:324px" width="16" height="16" viewBox="0 0 16 16"><path d="M5.5 13 V2 M3.3 4 L5.5 1 L7.7 4" stroke="#c01010" stroke-width="1.2" fill="none"/><path d="M5.5 13 H14 M11.5 10.8 L14.5 13 L11.5 15.2 Z" stroke="#c01010" stroke-width="1.2" fill="#c01010"/><path d="M3 13 H8 M5.5 10.5 V15.5 M3.7 11.2 L7.3 14.8 M3.7 14.8 L7.3 11.2" stroke="#111" stroke-width="0.8"/></svg>
<svg class="abs" style="left:41px;top:344px" width="16" height="16" viewBox="0 0 16 16"><path d="M5.1 0.5 H9.4 V2.9 H5.1 Z M11.5 0.5 H15.5 V2.9 H11.5 Z M1.5 3.8 H5.1 V7.1 H1.5 Z M1.5 9.5 H5.1 V13.5 H1.5 Z M7.6 13.6 H11.2 V15.6 H7.6 Z" fill="#f8a010" stroke="#000" stroke-width="1"/><rect x="5.1" y="2.9" width="10.4" height="10.9" fill="#c9ccd4" stroke="#000" stroke-width="1.1"/><path d="M5.8 3.6 H9 M5.8 3.6 V7 M14.8 10 V13.1 H12 M5.8 13.1 H7.5" stroke="#3a7ae0" stroke-width="0.8" fill="none"/><circle cx="10.4" cy="8.5" r="3.1" fill="#f6f7fa" stroke="#3c3c44" stroke-width="1.1"/></svg>
<svg class="abs" style="left:41px;top:364px" width="16" height="16" viewBox="0 0 16 16"><path d="M0.4 8.4 L7.8 15.7 L12 15.7 L14.8 12.6 L9 7.6 L6.2 11.6 Z" fill="#f08c00" stroke="#15151c" stroke-width="0.7" stroke-linejoin="round"/><path d="M7 12.2 L9.6 8.6 L14.4 12.6 L11.8 15.4 Z" fill="#ffab20"/><path d="M7.4 11.6 L9.8 13.8 L8.8 15.2 L6.4 12.8 Z" fill="#f4f6fa"/><path d="M0.4 0.3 L6.2 6.2 L6.2 11.8 L0.4 8.4 Z" fill="url(#gpl)" stroke="#15151c" stroke-width="0.9" stroke-linejoin="round"/><path d="M9.5 0.3 L15.4 5.8 L15.4 11.1 L9.5 7.8 Z" fill="url(#gpl)" stroke="#15151c" stroke-width="0.9" stroke-linejoin="round"/><path d="M0.6 9.4 L7.6 15.6" stroke="#15151c" stroke-width="0.9" stroke-dasharray="1.4 0.8"/></svg>
<svg class="abs" style="left:41px;top:384px" width="16" height="16" viewBox="0 0 16 16"><path d="M2.4 0.2 V5 M0.5 2.5 L2.4 0.2 L4.4 2.5" stroke="#1030f0" stroke-width="1.3" fill="none"/><path d="M2.5 6.3 L6.3 2.8 L9.6 2.8 L9.6 11.5 L5.6 15.4 L2.5 13.6 Z" fill="#f59a10" stroke="#000" stroke-width="1" stroke-linejoin="round"/><path d="M2.6 6.4 L6.3 3 L9.4 3 L5.8 6.4 Z" fill="#ffc040"/><path d="M5.8 6.6 L9.4 3.2 V11.4 L5.8 15 Z" fill="#e88400"/><path d="M2.5 6.4 H5.8 L9.5 2.9 M5.8 6.4 V15.3 M2.6 10 H5.8 L9.5 6.6 M4.1 6.4 V14.4 M5.8 12.6 L9.5 9.2" stroke="#000" stroke-width="0.6" fill="none"/><path d="M6.2 11.6 L9.6 8.8 L15.6 8.8 L15.6 11 L11.6 15.5 L6.2 15.5 Z" fill="#fafbfd" stroke="#000" stroke-width="1" stroke-linejoin="round"/><path d="M6.4 13.4 H11.6 L15.4 9.2 V10.8 L11.5 15.2 H6.4 Z" fill="#b9bdd0"/><path d="M6.2 13.3 H11.6 L15.5 9" stroke="#000" stroke-width="0.6" fill="none"/></svg>
<svg class="abs" style="left:41px;top:404px" width="16" height="16" viewBox="0 0 16 16"><path d="M1.5 0.8 H11 L15.4 4 V15.4 H5 L0.8 12.5 V1.5 Z" fill="#f8d000" stroke="#5a4000" stroke-width="1" stroke-linejoin="round"/><path d="M1.5 1 H11 L15 4 H5 Z" fill="#fff2a0"/><path d="M1 1.5 L4.8 4.2 V15.2 L1 12.4 Z" fill="#e8b000"/><path d="M4.9 4.1 H15.3 M4.9 4.1 V15.3" stroke="#7a5800" stroke-width="0.7"/><rect x="6.8" y="6" width="6.8" height="6.8" fill="#fafafa" stroke="#000" stroke-width="1.1"/><path d="M10.6 6.6 H13 V12.2 H7.4 V10 H10.6 Z" fill="#10a818"/></svg>
<svg class="abs" style="left:41px;top:424px" width="16" height="16" viewBox="0 0 16 16"><path d="M1 0.8 H5.5 V15.2 H1 L2.5 11.5 L1 8 L2.5 4.5 Z" fill="url(#ggr)" stroke="#5a5e6c" stroke-width="0.9"/><path d="M5.5 2 H9 A6.2 6.2 0 0 1 9 14.4 H5.5 Z" fill="url(#gor)" stroke="#a85c00" stroke-width="0.9"/><path d="M8 8.2 L10.2 6 L12.4 8.2 L10.2 10.4 Z" fill="#fff" stroke="#444" stroke-width="0.7"/></svg>
<svg class="abs" style="left:41px;top:444px" width="16" height="16" viewBox="0 0 16 16"><path d="M1.5 0.8 H11 L15.4 4 V15.4 H5 L0.8 12.5 V1.5 Z" fill="#f8d000" stroke="#5a4000" stroke-width="1" stroke-linejoin="round"/><path d="M1.5 1 H11 L15 4 H5 Z" fill="#fff2a0"/><path d="M1 1.5 L4.8 4.2 V15.2 L1 12.4 Z" fill="#e8b000"/><path d="M4.9 4.1 H15.3 M4.9 4.1 V15.3" stroke="#7a5800" stroke-width="0.7"/><rect x="6.8" y="6" width="6.8" height="6.8" fill="#fafafa" stroke="#000" stroke-width="1.1"/><path d="M10.6 6.6 H13 V12.2 H7.4 V10 H10.6 Z" fill="#10a818"/></svg>
<svg class="abs" style="left:41px;top:464px" width="16" height="16" viewBox="0 0 16 16"><path d="M0.8 0.8 L15.5 15.5" stroke="#0a7a1a" stroke-width="1.8" stroke-dasharray="3.8 1.6 1.2 1.6" fill="none"/></svg>
<svg class="abs" style="left:41px;top:484px" width="16" height="16" viewBox="0 0 16 16"><rect x="0.7" y="0.7000000000000002" width="3.4" height="7" rx="1.7" fill="#10c018" stroke="#021" stroke-width="1"/><rect x="6.3" y="0.7000000000000002" width="3.4" height="7" rx="1.7" fill="#10c018" stroke="#021" stroke-width="1"/><rect x="11.9" y="0.7000000000000002" width="3.4" height="7" rx="1.7" fill="#10c018" stroke="#021" stroke-width="1"/><rect x="0.7" y="8.5" width="3.4" height="7" rx="1.7" fill="#f0c000" stroke="#021" stroke-width="1"/><rect x="6.3" y="8.5" width="3.4" height="7" rx="1.7" fill="#10c018" stroke="#021" stroke-width="1"/><rect x="11.9" y="8.5" width="3.4" height="7" rx="1.7" fill="#10c018" stroke="#021" stroke-width="1"/></svg>
<svg class="abs" style="left:41px;top:504px" width="16" height="16" viewBox="0 0 16 16"><path d="M1.5 0.8 H11 L15.4 4 V15.4 H5 L0.8 12.5 V1.5 Z" fill="#f8d000" stroke="#5a4000" stroke-width="1" stroke-linejoin="round"/><path d="M1.5 1 H11 L15 4 H5 Z" fill="#fff2a0"/><path d="M1 1.5 L4.8 4.2 V15.2 L1 12.4 Z" fill="#e8b000"/><path d="M4.9 4.1 H15.3 M4.9 4.1 V15.3" stroke="#7a5800" stroke-width="0.7"/><rect x="6.8" y="6" width="6.8" height="6.8" fill="#fafafa" stroke="#000" stroke-width="1.1"/><path d="M10.6 6.6 H13 V12.2 H7.4 V10 H10.6 Z" fill="#10a818"/></svg>
<svg class="abs" style="left:41px;top:524px" width="16" height="16" viewBox="0 0 16 16"><path d="M1.5 0.8 H11 L15.4 4 V15.4 H5 L0.8 12.5 V1.5 Z" fill="#f8d000" stroke="#5a4000" stroke-width="1" stroke-linejoin="round"/><path d="M1.5 1 H11 L15 4 H5 Z" fill="#fff2a0"/><path d="M1 1.5 L4.8 4.2 V15.2 L1 12.4 Z" fill="#e8b000"/><path d="M4.9 4.1 H15.3 M4.9 4.1 V15.3" stroke="#7a5800" stroke-width="0.7"/><rect x="6.8" y="6" width="6.8" height="6.8" fill="#fafafa" stroke="#000" stroke-width="1.1"/><path d="M10.6 6.6 H13 V12.2 H7.4 V10 H10.6 Z" fill="#10a818"/></svg>
<svg class="abs" style="left:41px;top:544px" width="16" height="16" viewBox="0 0 16 16"><path d="M1 1 H4.5 V9 L6.5 11 V1.5 H9 V13 H5 L1 9.5 Z" fill="#f5d000" stroke="#111" stroke-width="1"/><path d="M9 1.5 H12.5 V10 L15.5 12.5 V15.5 H10.5 V12 L9 10.5 Z" fill="#18c828" stroke="#111" stroke-width="1"/><path d="M5 12.5 H10 V15.5 H5 Z" fill="#ffe860" stroke="#111" stroke-width="0.9"/><path d="M10.5 12.5 H15.5 V15.5 H10.5Z" fill="#30e040" stroke="#111" stroke-width="0.9"/></svg>
<svg class="abs" style="left:41px;top:564px" width="16" height="16" viewBox="0 0 16 16"><path d="M0.8 1 H12.5 L15.5 11 H3.5 Z" fill="#a8aab0" stroke="#8a8c92" stroke-width="0.8"/><path d="M3.5 11 H15.5 V15.5 H3.5 Z" fill="#c4c6cc" stroke="#8a8c92" stroke-width="0.8"/><path d="M0.8 1 L3.5 11 V15.5 L0.8 6Z" fill="#909298"/><path d="M5 1 L8 11 M8 1 L11 11" stroke="#d4d6da" stroke-width="1.2"/></svg>
<svg class="abs" style="left:773px;top:76px" width="16" height="16" viewBox="0 0 16 16"><path d="M0.5 11.5 L8 8.5 L15.5 11.5 L8 15.3 Z" fill="url(#gbl)" stroke="#4a8ad8" stroke-width="0.6"/><path d="M8 12 V1 M5.8 3.4 L8 0.8 L10.2 3.4" stroke="#222" stroke-width="1.1" fill="none"/></svg>
<svg class="abs" style="left:795px;top:76px" width="16" height="16" viewBox="0 0 16 16"><path d="M10 10 L15 15" stroke="#3a86e0" stroke-width="2.6" stroke-linecap="round"/><circle cx="6.3" cy="6.3" r="5.3" fill="#e6e8ee" stroke="#8a8e9a" stroke-width="1.3"/><path d="M4 5 V4 H5 M7.6 4 H8.6 V5 M8.6 7.6 V8.6 H7.6 M5 8.6 H4 V7.6" stroke="#333" stroke-width="1" fill="none"/></svg>
<svg class="abs" style="left:818px;top:76px" width="16" height="16" viewBox="0 0 16 16"><path d="M10 10 L15 15" stroke="#3a86e0" stroke-width="2.6" stroke-linecap="round"/><circle cx="6.8" cy="6.3" r="5.3" fill="#e6e8ee" stroke="#8a8e9a" stroke-width="1.3"/><rect x="0.8" y="0.8" width="8.5" height="8.5" fill="none" stroke="#444" stroke-width="1" stroke-dasharray="2 1.2"/><path d="M7.8 4 V7.8 H4" stroke="#444" stroke-width="1" fill="none"/></svg>
<svg class="abs" style="left:841px;top:76px" width="16" height="16" viewBox="0 0 16 16"><path d="M1 2 L5 1 L14.5 10.5 Q16 13.5 13 15 Q10 15.8 8.5 13 Z" fill="url(#gbl)" stroke="#2a6ac0" stroke-width="0.8"/><ellipse cx="12" cy="12.6" rx="2.6" ry="1.7" fill="#e8f4ff" transform="rotate(-40 12 12.6)"/><path d="M16 3 H11 M13 0.8 L10.6 3 L13 5.2" stroke="#2a6ae0" stroke-width="1.3" fill="none"/></svg>
<svg class="abs" style="left:864.5px;top:76px" width="16" height="16" viewBox="0 0 16 16"><path d="M0.5 3 Q7.5 -1.5 14.5 3 V13 Q13 15 10 15.5 V8 Q7.5 6.5 5 8 V15.5 Q2 15 0.5 13 Z" fill="#3a86e0" stroke="#1a4aa0" stroke-width="0.6"/><path d="M0.5 3 Q7.5 7 14.5 3 Q7.5 -1.5 0.5 3Z" fill="#9ccaf8"/><path d="M0.8 3.5 H4.5 V15.3 H0.8 Z M10.5 3.5 H14.2 V15.3 H10.5 Z" fill="#f4d020" stroke="#806000" stroke-width="0.6"/><path d="M2 5 L3.3 6.5 L2 8 L3.3 9.5 L2 11 L3.3 12.5 L2 14 M11.7 5 L13 6.5 L11.7 8 L13 9.5 L11.7 11 L13 12.5 L11.7 14" stroke="#806000" stroke-width="0.6" fill="none"/></svg>
<svg class="abs" style="left:887px;top:76px" width="16" height="16" viewBox="0 0 16 16"><path d="M5.5 0.8 H15.5 V10.5 L10.5 15.5 H0.8 V5.5 Z" fill="#f4f5f8" stroke="#333" stroke-width="0.9"/><path d="M0.8 5.5 H10.5 V15.5 M10.5 5.5 L15.5 0.8" stroke="#333" stroke-width="0.9" fill="none"/><rect x="0.8" y="5.5" width="9.7" height="10" fill="url(#gbl)" stroke="#2a5aa0" stroke-width="0.8"/><path d="M8 3.5 H11 M9.5 1.5 V5 M11.5 8.5 H14.5 M12 7 L10.8 8.5 L12 10" stroke="#e01010" stroke-width="0.9" fill="none"/></svg>
<svg class="abs" style="left:920px;top:76px" width="16" height="16" viewBox="0 0 16 16"><path d="M5.5 0.8 H15.5 V10.5 L10.5 15.5 H0.8 V5.5 Z" fill="#f8f8fa" stroke="#333" stroke-width="0.9"/><path d="M8 0.8 H15.5 V10.5 L10.5 15.5 H5.5 V5.5 Z" fill="url(#gbl)"/><path d="M10.5 5.5 L15.5 0.8 V10.5 L10.5 15.5 Z" fill="#2a60c8"/><path d="M0.8 5.5 H10.5 V15.5 M10.5 5.5 L15.5 0.8 M5.5 0.8 H15.5 V10.5 L10.5 15.5 H0.8 V5.5 Z" stroke="#333" stroke-width="0.9" fill="none"/></svg>
<svg class="abs" style="left:953px;top:76px" width="16" height="16" viewBox="0 0 16 16"><circle cx="3.8" cy="7.5" r="3" fill="#e4eefa" stroke="#555" stroke-width="1"/><circle cx="11" cy="10.5" r="3" fill="#e4eefa" stroke="#555" stroke-width="1"/><path d="M6.6 8.5 Q8 8 8.4 9.2 M3.5 4.6 Q3.5 1.5 6 1.5 M12.5 8 Q14 4.5 16 5" stroke="#555" stroke-width="1" fill="none"/></svg>
<svg class="abs" style="left:986px;top:76px" width="16" height="16" viewBox="0 0 16 16"><circle cx="8" cy="8" r="7.6" fill="#e8e8e8"/><path d="M8 8 L8 0.4 A7.6 7.6 0 0 0 0.4 8 Z" fill="#3878e8"/><path d="M8 8 L8 0.4 A7.6 7.6 0 0 1 15.6 8 Z" fill="#e83030"/><path d="M8 8 L15.6 8 A7.6 7.6 0 0 1 8 15.6 Z" fill="#f4c820"/><path d="M8 8 L0.4 8 A7.6 7.6 0 0 0 8 15.6 Z" fill="#30b040"/><circle cx="8" cy="8" r="7.6" fill="url(#gball)"/></svg>
<svg class="abs" style="left:1009px;top:76px" width="16" height="16" viewBox="0 0 16 16"><rect x="0" y="10" width="2" height="2" fill="#222"/><rect x="2" y="10" width="2" height="2" fill="#f4f4f4"/><rect x="4" y="10" width="2" height="2" fill="#222"/><rect x="6" y="10" width="2" height="2" fill="#f4f4f4"/><rect x="8" y="10" width="2" height="2" fill="#222"/><rect x="10" y="10" width="2" height="2" fill="#f4f4f4"/><rect x="12" y="10" width="2" height="2" fill="#222"/><rect x="14" y="10" width="2" height="2" fill="#f4f4f4"/><rect x="0" y="12" width="2" height="2" fill="#f4f4f4"/><rect x="2" y="12" width="2" height="2" fill="#222"/><rect x="4" y="12" width="2" height="2" fill="#f4f4f4"/><rect x="6" y="12" width="2" height="2" fill="#222"/><rect x="8" y="12" width="2" height="2" fill="#f4f4f4"/><rect x="10" y="12" width="2" height="2" fill="#222"/><rect x="12" y="12" width="2" height="2" fill="#f4f4f4"/><rect x="14" y="12" width="2" height="2" fill="#222"/><rect x="0" y="14" width="2" height="2" fill="#222"/><rect x="2" y="14" width="2" height="2" fill="#f4f4f4"/><rect x="4" y="14" width="2" height="2" fill="#222"/><rect x="6" y="14" width="2" height="2" fill="#f4f4f4"/><rect x="8" y="14" width="2" height="2" fill="#222"/><rect x="10" y="14" width="2" height="2" fill="#f4f4f4"/><rect x="12" y="14" width="2" height="2" fill="#222"/><rect x="14" y="14" width="2" height="2" fill="#f4f4f4"/><g transform="translate(2,0) scale(0.78)"><circle cx="8" cy="8" r="7.6" fill="#e8e8e8"/><path d="M8 8 L8 0.4 A7.6 7.6 0 0 0 0.4 8 Z" fill="#3878e8"/><path d="M8 8 L8 0.4 A7.6 7.6 0 0 1 15.6 8 Z" fill="#e83030"/><path d="M8 8 L15.6 8 A7.6 7.6 0 0 1 8 15.6 Z" fill="#f4c820"/><path d="M8 8 L0.4 8 A7.6 7.6 0 0 0 8 15.6 Z" fill="#30b040"/><circle cx="8" cy="8" r="7.6" fill="url(#gball)"/></g></svg>
<svg class="abs" style="left:1042px;top:76px" width="16" height="16" viewBox="0 0 16 16"><rect x="0.8" y="2" width="12.5" height="10" fill="#e8eaee" stroke="#444" stroke-width="1.1"/><rect x="2.5" y="3.8" width="9" height="6.4" fill="#7aa8d8"/><path d="M4 14.5 H10.5 M2.5 15.6 H12 M7.2 12 V14.5" stroke="#444" stroke-width="1"/><path d="M4.5 6 L8.5 1.5 L11.5 0.5 L15.8 1 L16 3.8 L12.5 5 L10 4.8 L7 8 Z" fill="#f0c090" stroke="#a06a30" stroke-width="0.6"/></svg>
<svg class="abs" style="left:906.5px;top:83.5px" width="6" height="4"><path d="M0 0 H6 L3 3.6 Z" fill="#3a3a6e"/></svg>
<svg class="abs" style="left:939.5px;top:83.5px" width="6" height="4"><path d="M0 0 H6 L3 3.6 Z" fill="#3a3a6e"/></svg>
<svg class="abs" style="left:972.5px;top:83.5px" width="6" height="4"><path d="M0 0 H6 L3 3.6 Z" fill="#3a3a6e"/></svg>
<svg class="abs" style="left:1028.5px;top:83.5px" width="6" height="4"><path d="M0 0 H6 L3 3.6 Z" fill="#3a3a6e"/></svg>
<svg class="abs" style="left:1061.5px;top:83.5px" width="6" height="4"><path d="M0 0 H6 L3 3.6 Z" fill="#3a3a6e"/></svg>
<svg class="abs" style="left:0px;top:107.5px" width="14" height="17" viewBox="0 0 14 17"><path d="M0.5 5.5 H10.5 V15.5 H0.5 Z" fill="#d9dce8" stroke="#a2a6b8" stroke-width="0.9"/><path d="M0.5 5.5 L3.5 1.5 H13.5 L10.5 5.5 Z" fill="#e6e8f0" stroke="#a2a6b8" stroke-width="0.9"/><path d="M10.5 5.5 L13.5 1.5 V11.5 L10.5 15.5 Z" fill="#cfd3e0" stroke="#a2a6b8" stroke-width="0.9"/><path d="M3.5 1.5 V11.5 H13.5 M3.5 11.5 L0.5 15.5" fill="none" stroke="#b4b8c8" stroke-width="0.7"/></svg>
<svg class="abs" style="left:0px;top:131px" width="14" height="17" viewBox="0 0 14 17"><path d="M0.5 5.5 H10.5 V15.5 H0.5 Z" fill="#d9dce8" stroke="#a2a6b8" stroke-width="0.9"/><path d="M0.5 5.5 L3.5 1.5 H13.5 L10.5 5.5 Z" fill="#e6e8f0" stroke="#a2a6b8" stroke-width="0.9"/><path d="M10.5 5.5 L13.5 1.5 V11.5 L10.5 15.5 Z" fill="#cfd3e0" stroke="#a2a6b8" stroke-width="0.9"/><path d="M3.5 1.5 V11.5 H13.5 M3.5 11.5 L0.5 15.5" fill="none" stroke="#b4b8c8" stroke-width="0.7"/></svg>
<svg class="abs" style="left:0px;top:154px" width="14" height="17" viewBox="0 0 14 17"><path d="M0.5 5.5 H10.5 V15.5 H0.5 Z" fill="#d9dce8" stroke="#a2a6b8" stroke-width="0.9"/><path d="M0.5 5.5 L3.5 1.5 H13.5 L10.5 5.5 Z" fill="#e6e8f0" stroke="#a2a6b8" stroke-width="0.9"/><path d="M10.5 5.5 L13.5 1.5 V11.5 L10.5 15.5 Z" fill="#cfd3e0" stroke="#a2a6b8" stroke-width="0.9"/><path d="M3.5 1.5 V11.5 H13.5 M3.5 11.5 L0.5 15.5" fill="none" stroke="#b4b8c8" stroke-width="0.7"/></svg>
<svg class="abs" style="left:0px;top:177px" width="14" height="17" viewBox="0 0 14 17"><path d="M0.5 5.5 H10.5 V15.5 H0.5 Z" fill="#d9dce8" stroke="#a2a6b8" stroke-width="0.9"/><path d="M0.5 5.5 L3.5 1.5 H13.5 L10.5 5.5 Z" fill="#e6e8f0" stroke="#a2a6b8" stroke-width="0.9"/><path d="M10.5 5.5 L13.5 1.5 V11.5 L10.5 15.5 Z" fill="#cfd3e0" stroke="#a2a6b8" stroke-width="0.9"/><path d="M3.5 1.5 V11.5 H13.5 M3.5 11.5 L0.5 15.5" fill="none" stroke="#b4b8c8" stroke-width="0.7"/></svg>
<svg class="abs" style="left:0px;top:200px" width="14" height="17" viewBox="0 0 14 17"><path d="M0.5 5.5 H10.5 V15.5 H0.5 Z" fill="#d9dce8" stroke="#a2a6b8" stroke-width="0.9"/><path d="M0.5 5.5 L3.5 1.5 H13.5 L10.5 5.5 Z" fill="#e6e8f0" stroke="#a2a6b8" stroke-width="0.9"/><path d="M10.5 5.5 L13.5 1.5 V11.5 L10.5 15.5 Z" fill="#cfd3e0" stroke="#a2a6b8" stroke-width="0.9"/><path d="M3.5 1.5 V11.5 H13.5 M3.5 11.5 L0.5 15.5" fill="none" stroke="#b4b8c8" stroke-width="0.7"/></svg>
<svg class="abs" style="left:0px;top:223px" width="14" height="17" viewBox="0 0 14 17"><path d="M0.5 5.5 H10.5 V15.5 H0.5 Z" fill="#d9dce8" stroke="#a2a6b8" stroke-width="0.9"/><path d="M0.5 5.5 L3.5 1.5 H13.5 L10.5 5.5 Z" fill="#e6e8f0" stroke="#a2a6b8" stroke-width="0.9"/><path d="M10.5 5.5 L13.5 1.5 V11.5 L10.5 15.5 Z" fill="#cfd3e0" stroke="#a2a6b8" stroke-width="0.9"/><path d="M3.5 1.5 V11.5 H13.5 M3.5 11.5 L0.5 15.5" fill="none" stroke="#b4b8c8" stroke-width="0.7"/></svg>
<svg class="abs" style="left:0px;top:244px" width="14" height="17" viewBox="0 0 14 17"><path d="M0.5 8 L5 2.5 H9 L13 7 V13 L9 16 H0.5 Z M0.5 8 H9 L13 7 M9 8 V16" fill="none" stroke="#aeb2c2" stroke-width="1"/></svg>
<div class="abs" style="left:0;top:269px;width:16px;height:1px;background:#9ea2b4"></div>
<div class="abs" style="left:0;top:346px;width:16px;height:1px;background:#9ea2b4"></div>
<svg class="abs" style="left:0px;top:277px" width="15" height="16" viewBox="0 0 15 16"><path d="M0 14 H6" stroke="#1030c0" stroke-width="1.6"/><path d="M5 13 L12 3 L14 4.5 L7 14.5 Z" fill="#f4c430" stroke="#7a5a10" stroke-width="0.7"/><circle cx="13" cy="3" r="1.6" fill="#e05050"/><path d="M1 2 L5 6 M5 2 L1 6 M3 1 V7 M0 4 H6" stroke="#f08020" stroke-width="0.8"/></svg>
<svg class="abs" style="left:0px;top:300px" width="15" height="16" viewBox="0 0 15 16"><path d="M0 6.5 H5 M2.5 4 V9" stroke="#9a9eae" stroke-width="1.4"/><path d="M5 13 L11 3 L13 4.5 L7 14.5 Z" fill="#d4d6de" stroke="#a4a8b8" stroke-width="0.7"/></svg>
<svg class="abs" style="left:0px;top:323px" width="15" height="16" viewBox="0 0 15 16"><rect x="2" y="1.5" width="9" height="7" fill="#f4f4f8" stroke="#1030d0" stroke-width="1.6"/><circle cx="2.5" cy="9" r="2.4" fill="#20b030"/><circle cx="11" cy="13" r="2.4" fill="#20b030"/><path d="M3 13 H8 M6 10.8 L8.5 13 L6 15.2" stroke="#e01010" stroke-width="1.6" fill="none"/></svg>
<svg class="abs" style="left:0px;top:354px" width="15" height="16" viewBox="0 0 15 16"><path d="M0 2 H6.5 L10 4.5 V14 H3 L0 11.5 Z" fill="#f5cc0a" stroke="#8a6400" stroke-width="0.9"/><rect x="2" y="5" width="6" height="6" fill="#20a030" stroke="#052" stroke-width="0.8"/><rect x="7.5" y="9.5" width="6" height="6" fill="none" stroke="#2040e0" stroke-width="1.1"/></svg>
<svg class="abs" style="left:0px;top:377px" width="15" height="16" viewBox="0 0 15 16"><path d="M0 2 H6.5 L10 4.5 V14 H3 L0 11.5 Z" fill="#f5cc0a" stroke="#8a6400" stroke-width="0.9"/><rect x="2" y="5" width="6" height="6" fill="#20a030" stroke="#052" stroke-width="0.8"/><rect x="7.5" y="9.5" width="6" height="6" fill="none" stroke="#2040e0" stroke-width="1.1"/></svg>
<svg class="abs" style="left:228px;top:850px" width="70" height="64" viewBox="228 850 70 64"><defs><linearGradient id="tg" x1="0" x2="1"><stop offset="0" stop-color="#0a5a0a"/><stop offset="0.5" stop-color="#3aa03a"/><stop offset="1" stop-color="#0a5a0a"/></linearGradient><linearGradient id="tr" x1="0" x2="0" y1="0" y2="1"><stop offset="0" stop-color="#ff5a5a"/><stop offset="1" stop-color="#a00000"/></linearGradient></defs><path d="M257 894 L246 898" stroke="#1a1a9a" stroke-width="3.4" stroke-linecap="round"/><ellipse cx="244.6" cy="898.6" rx="4.2" ry="3.2" fill="#1c1cc0" transform="rotate(-15 244.6 898.6)"/><path d="M257 894.6 L274 897.4" stroke="url(#tr)" stroke-width="3"/><path d="M273 893.5 L281.5 898.8 L272 902.2 Z" fill="url(#tr)"/><path d="M274.5 896 L279.5 898.6 L274 899.5Z" fill="#ffc0c0" opacity="0.8"/><rect x="255.2" y="874" width="3.4" height="20.5" fill="url(#tg)"/><path d="M252.4 875 L257 866 L261.4 875 Z" fill="url(#tg)"/><text x="256.6" y="864.6" text-anchor="middle" font-family="Liberation Mono,monospace" font-weight="bold" font-size="10" fill="#0a7a0a">Y</text><text x="283.2" y="903.6" text-anchor="middle" font-family="Liberation Mono,monospace" font-weight="bold" font-size="10" fill="#ee1010">X</text><text x="237.2" y="905" text-anchor="middle" font-family="Liberation Mono,monospace" font-weight="bold" font-size="10" fill="#1010ee">Z</text></svg>
</body></html>
